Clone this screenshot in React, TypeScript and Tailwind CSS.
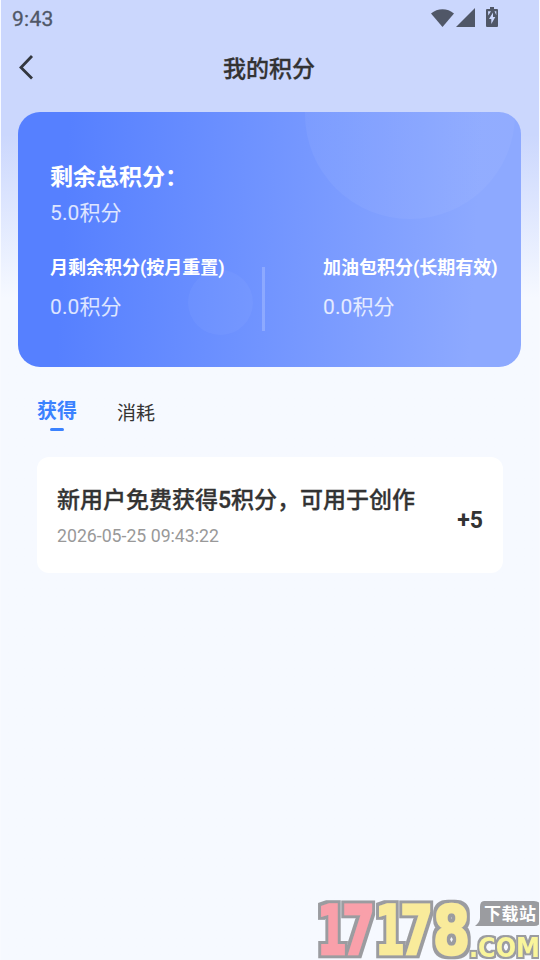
import React, { useState } from 'react';

interface PointRecord {
  id: number;
  title: string;
  time: string;
  amount: string;
}

type TabKey = 'earned' | 'spent';

const earnedRecords: PointRecord[] = [
  { id: 1, title: '新用户免费获得5积分，可用于创作', time: '2026-05-25 09:43:22', amount: '+5' },
];

// Posição e largura de cada dígito do logo
const logoDigits = [
  { char: '1', x: 3, width: 30, color: '#f9a0aa' },
  { char: '7', x: 28, width: 33, color: '#f9a0aa' },
  { char: '1', x: 61, width: 30, color: '#f9eb9b' },
  { char: '7', x: 86, width: 33, color: '#f9eb9b' },
  { char: '8', x: 119, width: 37, color: '#f9eb9b' },
];

const StatusBar: React.FC = () => (
  <div className="flex h-9 items-center justify-between pl-[11px] pr-10 text-[#505767]">
    <span className="pt-0.5 text-[21px] leading-6 tracking-[0.3px] [-webkit-text-stroke:0.3px_#505767]">9:43</span>
    <svg width="68" height="22" viewBox="0 0 68 22" fill="currentColor">
      <path d="M0 6.500C6.500 0.800 16.500 0.800 23 6.500L11.500 20Z" />
      <path d="M25 20L44 1V20Z" />
      <path d="M59 0h4v2h3q1 0 1 1v16q0 1-1 1H56q-1 0-1-1V3q0-1 1-1h3Z" />
      <path d="M62 5.500L58 12h2.300v5l4-7H62Z" fill="#cbd7fd" />
      <path d="M57 4.200h3L57.300 8.500ZM63.500 4.200h1.800v4Z" fill="#cbd7fd" />
    </svg>
  </div>
);

// Marca d'água no rodapé da tela
const Watermark: React.FC = () => (
  <svg
    className="pointer-events-none absolute -right-px bottom-0"
    width="226"
    height="62"
    viewBox="0 0 226 62"
    fontFamily="'DejaVu Sans', sans-serif"
    fontWeight="bold"
  >
    <defs>
      <filter id="digitOutline" x="0" y="0" width="226" height="62" filterUnits="userSpaceOnUse">
        <feMorphology in="SourceAlpha" operator="dilate" radius="3" result="grown" />
        <feFlood floodColor="#9b9ca0" />
        <feComposite in2="grown" operator="in" result="outline" />
        <feMerge>
          <feMergeNode in="outline" />
          <feMergeNode in="SourceGraphic" />
        </feMerge>
      </filter>
      <filter id="domainOutline" x="0" y="0" width="226" height="62" filterUnits="userSpaceOnUse">
        <feMorphology in="SourceAlpha" operator="dilate" radius="2" result="grown" />
        <feFlood floodColor="#9b9ca0" />
        <feComposite in2="grown" operator="in" result="outline" />
        <feMerge>
          <feMergeNode in="outline" />
          <feMergeNode in="SourceGraphic" />
        </feMerge>
      </filter>
    </defs>
    <g fontSize="67" strokeWidth="2.500" strokeLinejoin="miter" filter="url(#digitOutline)">
      {logoDigits.map((digit) => (
        <text
          key={digit.x}
          x={digit.x}
          y="56"
          fill={digit.color}
          stroke={digit.color}
          textLength={digit.width}
          lengthAdjust="spacingAndGlyphs"
        >
          {digit.char}
        </text>
      ))}
    </g>
    <path d="M170 3h50q7 0 7 7v11q0 7-7 7h-59q5-4 5-8V9q0-6 4-6Z" fill="#9b9ca0" />
    <text x="170" y="22" fontSize="17" fill="#fff" fontFamily="'Noto Sans CJK SC', sans-serif" textLength="52">下载站</text>
    <text x="155" y="59" fontSize="26" fill="#f9f59b" textLength="71" lengthAdjust="spacingAndGlyphs" filter="url(#domainOutline)">.COM</text>
  </svg>
);

const App: React.FC = () => {
  const [activeTab, setActiveTab] = useState<TabKey>('earned');
  const records = activeTab === 'earned' ? earnedRecords : [];

  return (
    <div className="relative h-[960px] w-[540px] overflow-hidden border-x border-[#f8faff] bg-[#f6f9ff] bg-linear-to-b from-[#cbd7fd] from-[14%] to-[#f6f9ff] to-[31%] font-['Roboto','Noto_Sans_CJK_SC',sans-serif]">
      <StatusBar />

      <header className="grid h-[62px] grid-cols-[60px_1fr_62px] items-center">
        <button type="button" className="pl-[17px]">
          <svg width="16" height="26" viewBox="0 0 16 26" fill="none" stroke="#33373f" strokeWidth="2.800">
            <path d="M14 2L3 13.500L14 24.500" />
          </svg>
        </button>
        <h1 className="pt-1.5 text-center text-[23px] font-medium text-[#333] [-webkit-text-stroke:0.3px_#333]">我的积分</h1>
      </header>

      <section className="relative mr-[18px] ml-[17px] mt-3.5 h-[255px] overflow-hidden rounded-[22px] bg-linear-[93deg] from-[#5680ff] from-10% to-[#8da9ff] to-90% px-8 pt-[49px] text-white">
        <div className="absolute -top-[103px] left-[287px] size-[210px] rounded-full bg-linear-to-r from-white/5 to-white/4" />
        <div className="absolute top-[158px] left-[170px] size-[65px] rounded-full bg-white/4" />
        <div className="relative">
          <h2 className="text-[23px] leading-[34px] font-bold">剩余总积分：</h2>
          <p className="mt-0.5 text-[21px] leading-8 tracking-[0.1px] text-white/80">5.0积分</p>
          <div className="mt-[22px] flex">
            <div className="w-[212px] shrink-0">
              <h3 className="text-lg leading-[34px] font-bold whitespace-nowrap">月剩余积分(按月重置)</h3>
              <p className="mt-1.5 text-[21px] leading-8 tracking-[0.1px] text-white/80">0.0积分</p>
            </div>
            <div className="mt-4 h-16 w-[3px] shrink-0 bg-white/20" />
            <div className="shrink-0 pl-[58px]">
              <h3 className="text-lg leading-[34px] font-bold whitespace-nowrap">加油包积分(长期有效)</h3>
              <p className="mt-1.5 text-[21px] leading-8 tracking-[0.1px] text-white/80">0.0积分</p>
            </div>
          </div>
        </div>
      </section>

      <nav className="mt-[27px] flex h-[38px] items-start gap-10 pl-9">
        <button type="button" onClick={() => setActiveTab('earned')} className="flex flex-col items-center text-xl leading-[34px] font-bold text-[#3b82ff]">
          获得
          <span className="h-[3px] w-3.5 rounded-full bg-[#3b82ff]" />
        </button>
        <button type="button" onClick={() => setActiveTab('spent')} className="pt-[3px] text-[19px] leading-[34px] text-[#333]">
          消耗
        </button>
      </nav>

      <ul className="mx-9 mt-[25px]">
        {records.map((record) => (
          <li key={record.id} className="flex h-[116px] items-center justify-between rounded-xl bg-white px-5">
            <div className="pt-1">
              <p className="text-[23px] leading-[34px] font-medium text-[#333] [-webkit-text-stroke:0.3px_#333]">{record.title}</p>
              <p className="mt-1 text-[17.700px] leading-7 text-[#999]">{record.time}</p>
            </div>
            <span className="pt-3 text-[23px] font-bold text-[#333]">{record.amount}</span>
          </li>
        ))}
      </ul>

      <Watermark />
    </div>
  );
};

export default App;
